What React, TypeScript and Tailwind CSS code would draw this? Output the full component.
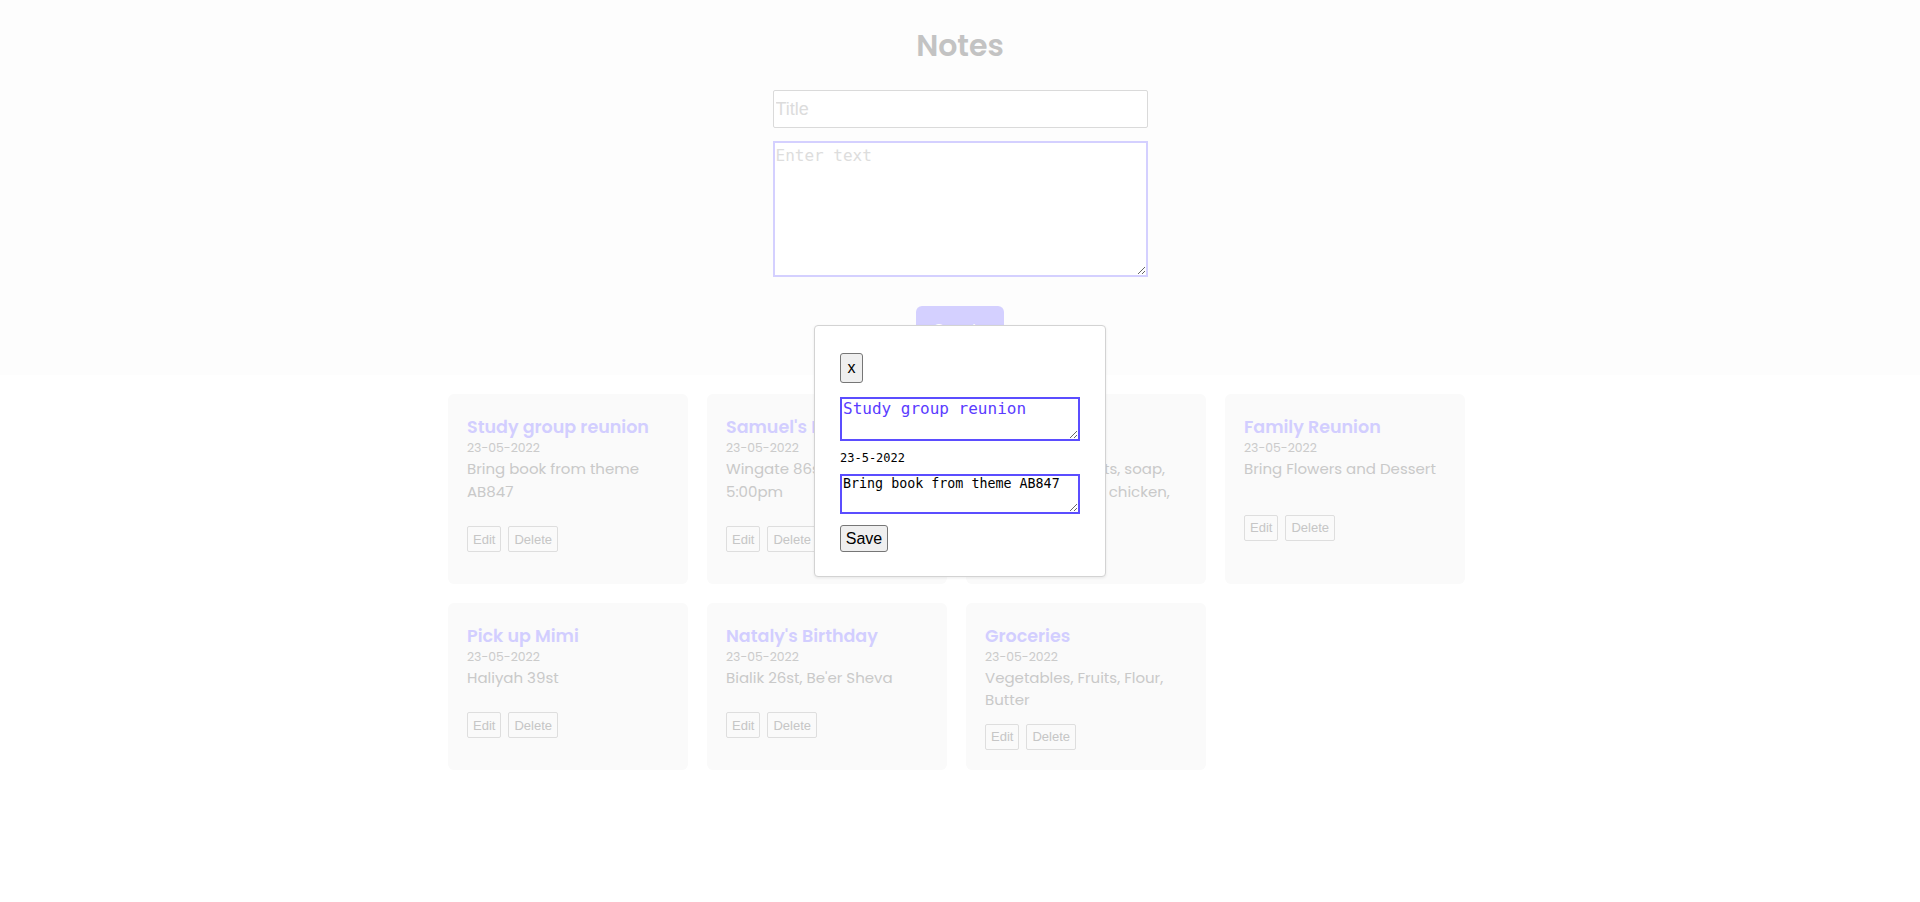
import React from "react";

type Note = { title: string; date: string; body: string };

const notes: Note[] = [
  { title: "Study group reunion", date: "23-05-2022", body: "Bring book from theme AB847" },
  { title: "Samuel's Birthday", date: "23-05-2022", body: "Wingate 86st, Holon at 5:00pm" },
  { title: "Shopping", date: "23-05-2022", body: "Hygiene products, soap, shampoo, eggs, chicken, vegetables" },
  { title: "Family Reunion", date: "23-05-2022", body: "Bring Flowers and Dessert" },
  { title: "Pick up Mimi", date: "23-05-2022", body: "Haliyah 39st" },
  { title: "Nataly's Birthday", date: "23-05-2022", body: "Bialik 26st, Be'er Sheva" },
  { title: "Groceries", date: "23-05-2022", body: "Vegetables, Fruits, Flour, Butter" },
];

const sans = "font-['Poppins','Inter','Noto_Sans',sans-serif]";

function Card({ n }: { n: Note }) {
  return (
    <div className={`flex flex-col rounded-[6px] bg-[#fafafa] px-[19px] pt-[20px] pb-[20px] ${sans}`}>
      <div>
        <div className="text-[17.5px] leading-[26px] font-semibold text-[#d2ceff]">{n.title}</div>
        <div className="text-[12.4px] leading-[16px] text-[#cbcbcb]">{n.date}</div>
        <div className="mt-[2px] text-[15px] leading-[22.5px] text-[#c9c9c9]">{n.body}</div>
      </div>
      <div className="my-auto flex gap-[7px] pt-[12px] font-['Liberation_Sans',Arial,sans-serif]">
        <button className="h-[26px] rounded-[2px] border border-[#dedede] px-[5px] text-[13px] text-[#c6c6c6]">Edit</button>
        <button className="h-[26px] rounded-[2px] border border-[#dedede] px-[5px] text-[13px] text-[#c6c6c6]">Delete</button>
      </div>
    </div>
  );
}

export default function App() {
  return (
    <div className="relative min-h-[902px] bg-white">
      <header className="flex h-[375px] flex-col items-center bg-[#fdfdfd] pt-[22px]">
        <h1 className={`text-[30px] leading-[48px] font-semibold text-[#c3c3c3] ${sans}`}>Notes</h1>
        <input
          placeholder="Title"
          className="mt-[20px] h-[38px] w-[375px] rounded-[2px] border border-[#dadada] bg-white px-[2px] text-[18px] font-['Liberation_Sans',Arial,sans-serif] placeholder:text-[#dcdcdc] outline-none"
        />
        <textarea
          placeholder="Enter text"
          className="mt-[13px] h-[136px] w-[375px] border-2 border-[#d4d0ff] bg-white px-[1px] pt-[1px] text-[16px] font-['DejaVu_Sans_Mono',monospace] placeholder:text-[#dddddd] outline-none"
        />
        <button className={`mt-[29px] h-[48px] w-[88px] rounded-[6px] bg-[#d4d0ff] text-[16px] text-white ${sans}`}>Create</button>
      </header>

      <div className="mx-auto mt-[19px] w-[1024px]">
        <div className="grid grid-cols-[repeat(4,240px)] gap-[19px]">
          {notes.map((n) => (
            <Card key={n.title} n={n} />
          ))}
        </div>
      </div>

      <div className="absolute left-[814px] top-[325px] flex h-[252px] w-[292px] flex-col items-start rounded-[4px] border border-[#d3d3d3] bg-white pl-[25px] pt-[27px] shadow-[0_1px_3px_rgba(0,0,0,0.08)]">
        <button className="h-[30px] w-[23px] rounded-[3px] border border-[#767676] bg-[#efefef] text-[16px] leading-none text-black font-['Liberation_Sans',Arial,sans-serif]">x</button>
        <textarea
          defaultValue="Study group reunion"
          className="mt-[14px] h-[44px] w-[240px] border-2 border-[#5b4dff] px-[1px] pt-0 text-[16px] leading-[19px] text-[#5a3cff] font-['DejaVu_Sans_Mono',monospace] outline-none"
        />
        <div className="mt-[8px] text-[12px] leading-[18px] text-black font-['DejaVu_Sans_Mono',monospace]">23-5-2022</div>
        <textarea
          defaultValue="Bring book from theme AB847"
          className="mt-[7px] h-[40px] w-[240px] border-2 border-[#5b4dff] px-[1px] pt-0 text-[13.33px] leading-[16px] text-black font-['DejaVu_Sans_Mono',monospace] outline-none"
        />
        <button className="mt-[11px] h-[27px] w-[48px] rounded-[3px] border border-[#767676] bg-[#efefef] text-[16px] leading-none text-black font-['Liberation_Sans',Arial,sans-serif]">Save</button>
      </div>
    </div>
  );
}
